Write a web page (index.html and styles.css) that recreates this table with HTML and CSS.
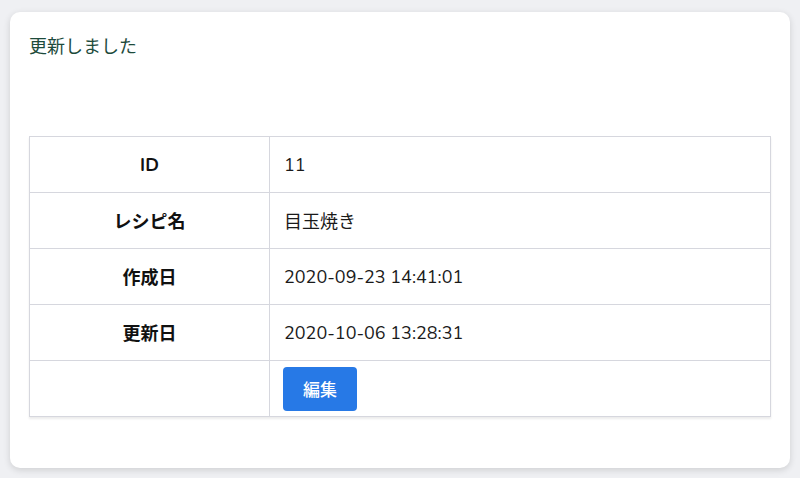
FILE: index.html
```html
<!DOCTYPE html>
<html lang="ja">
<head>
<meta charset="utf-8">
<link rel="stylesheet" href="styles.css">
</head>
<body>
<div class="card">
  <p class="notice">更新しました</p>
  <table class="detail">
    <tr><th>ID</th><td>11</td></tr>
    <tr><th>レシピ名</th><td>目玉焼き</td></tr>
    <tr><th>作成日</th><td>2020-09-23 14:41:01</td></tr>
    <tr><th>更新日</th><td>2020-10-06 13:28:31</td></tr>
    <tr><th></th><td><button class="btn">編集</button></td></tr>
  </table>
</div>
</body>
</html>
```
FILE: styles.css
```css
html, body {
  margin: 0;
  padding: 0;
}
body {
  background: #eff0f3;
  font-family: "Nunito", "Lato", "Noto Sans CJK JP", sans-serif;
  color: #1a1a1a;
  padding: 12px 10px 11px;
}
.card {
  background: #fff;
  border-radius: 10px;
  box-shadow: 0 2px 7px rgba(0,0,0,0.14);
  padding: 22px 19px 51px;
}
.notice {
  margin: 0;
  font-size: 18px;
  line-height: 26px;
  color: #1d4b3c;
}
.detail {
  margin-top: 76px;
  width: 100%;
  border-collapse: collapse;
  border: 1px solid #d6d7de;
  box-shadow: 0 2px 2px rgba(0,0,0,0.08);
  font-size: 18px;
}
.detail th, .detail td {
  border: 1px solid #d6d7de;
  height: 56px;
  padding: 0 13px;
  box-sizing: border-box;
}
.detail th {
  width: 240px;
  font-weight: 700;
  text-align: center;
  color: #111;
}
.detail td {
  text-align: left;
}
.detail td:last-child {
  padding-left: 14px;
}
.btn {
  display: block;
  margin-left: -1px;
  background: #2779e6;
  color: #fff;
  border: none;
  border-radius: 4px;
  width: 74px;
  height: 44px;
  font-family: inherit;
  font-size: 17px;
  font-weight: 500;
  padding: 0;
}
```
